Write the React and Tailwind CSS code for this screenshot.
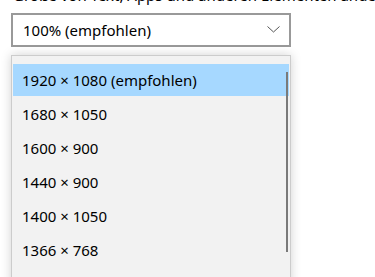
export default function App() {
  const items = [
    "1920 × 1080 (empfohlen)",
    "1680 × 1050",
    "1600 × 900",
    "1440 × 900",
    "1400 × 1050",
    "1366 × 768",
  ];
  return (
    <div
      className="relative w-[375px] h-[277px] overflow-hidden bg-white text-black"
      style={{ fontFamily: '"Noto Sans", "Open Sans", sans-serif' }}
    >
      <div className="mt-[-15px] ml-[13px] whitespace-nowrap text-[15px] leading-[20px]">
        Größe von Text, Apps und anderen Elementen ände
      </div>
      <div className="ml-[11px] mt-[8px] w-[280px] h-[34px] border-2 border-[#999999] flex items-center justify-between pl-[10px] pr-[9px]">
        <span className="text-[15px] leading-none">100% (empfohlen)</span>
        <svg width="13" height="7" viewBox="0 0 13 7" className="mt-[-2px]">
          <path d="M0.5 0.5 L6.5 6 L12.5 0.5" fill="none" stroke="#555" strokeWidth="1" />
        </svg>
      </div>
      <div className="relative ml-[11px] mt-[8px] w-[280px] h-[240px] border border-[#cccccc] bg-[#f2f2f2] px-px pt-[8px] flex flex-col gap-[2px] shadow-[0_0_10px_rgba(0,0,0,0.18)]">
        {items.map((t, i) => (
          <div
            key={t}
            className={
              "h-[32px] shrink-0 flex items-center pl-[9px] text-[15px] leading-none " +
              (i === 0 ? "bg-[#a6d8ff]" : "")
            }
          >
            {t}
          </div>
        ))}
        <div className="absolute left-[274px] top-[16px] w-[2px] h-[180px] bg-[#7a7a7a]" />
      </div>
    </div>
  );
}
